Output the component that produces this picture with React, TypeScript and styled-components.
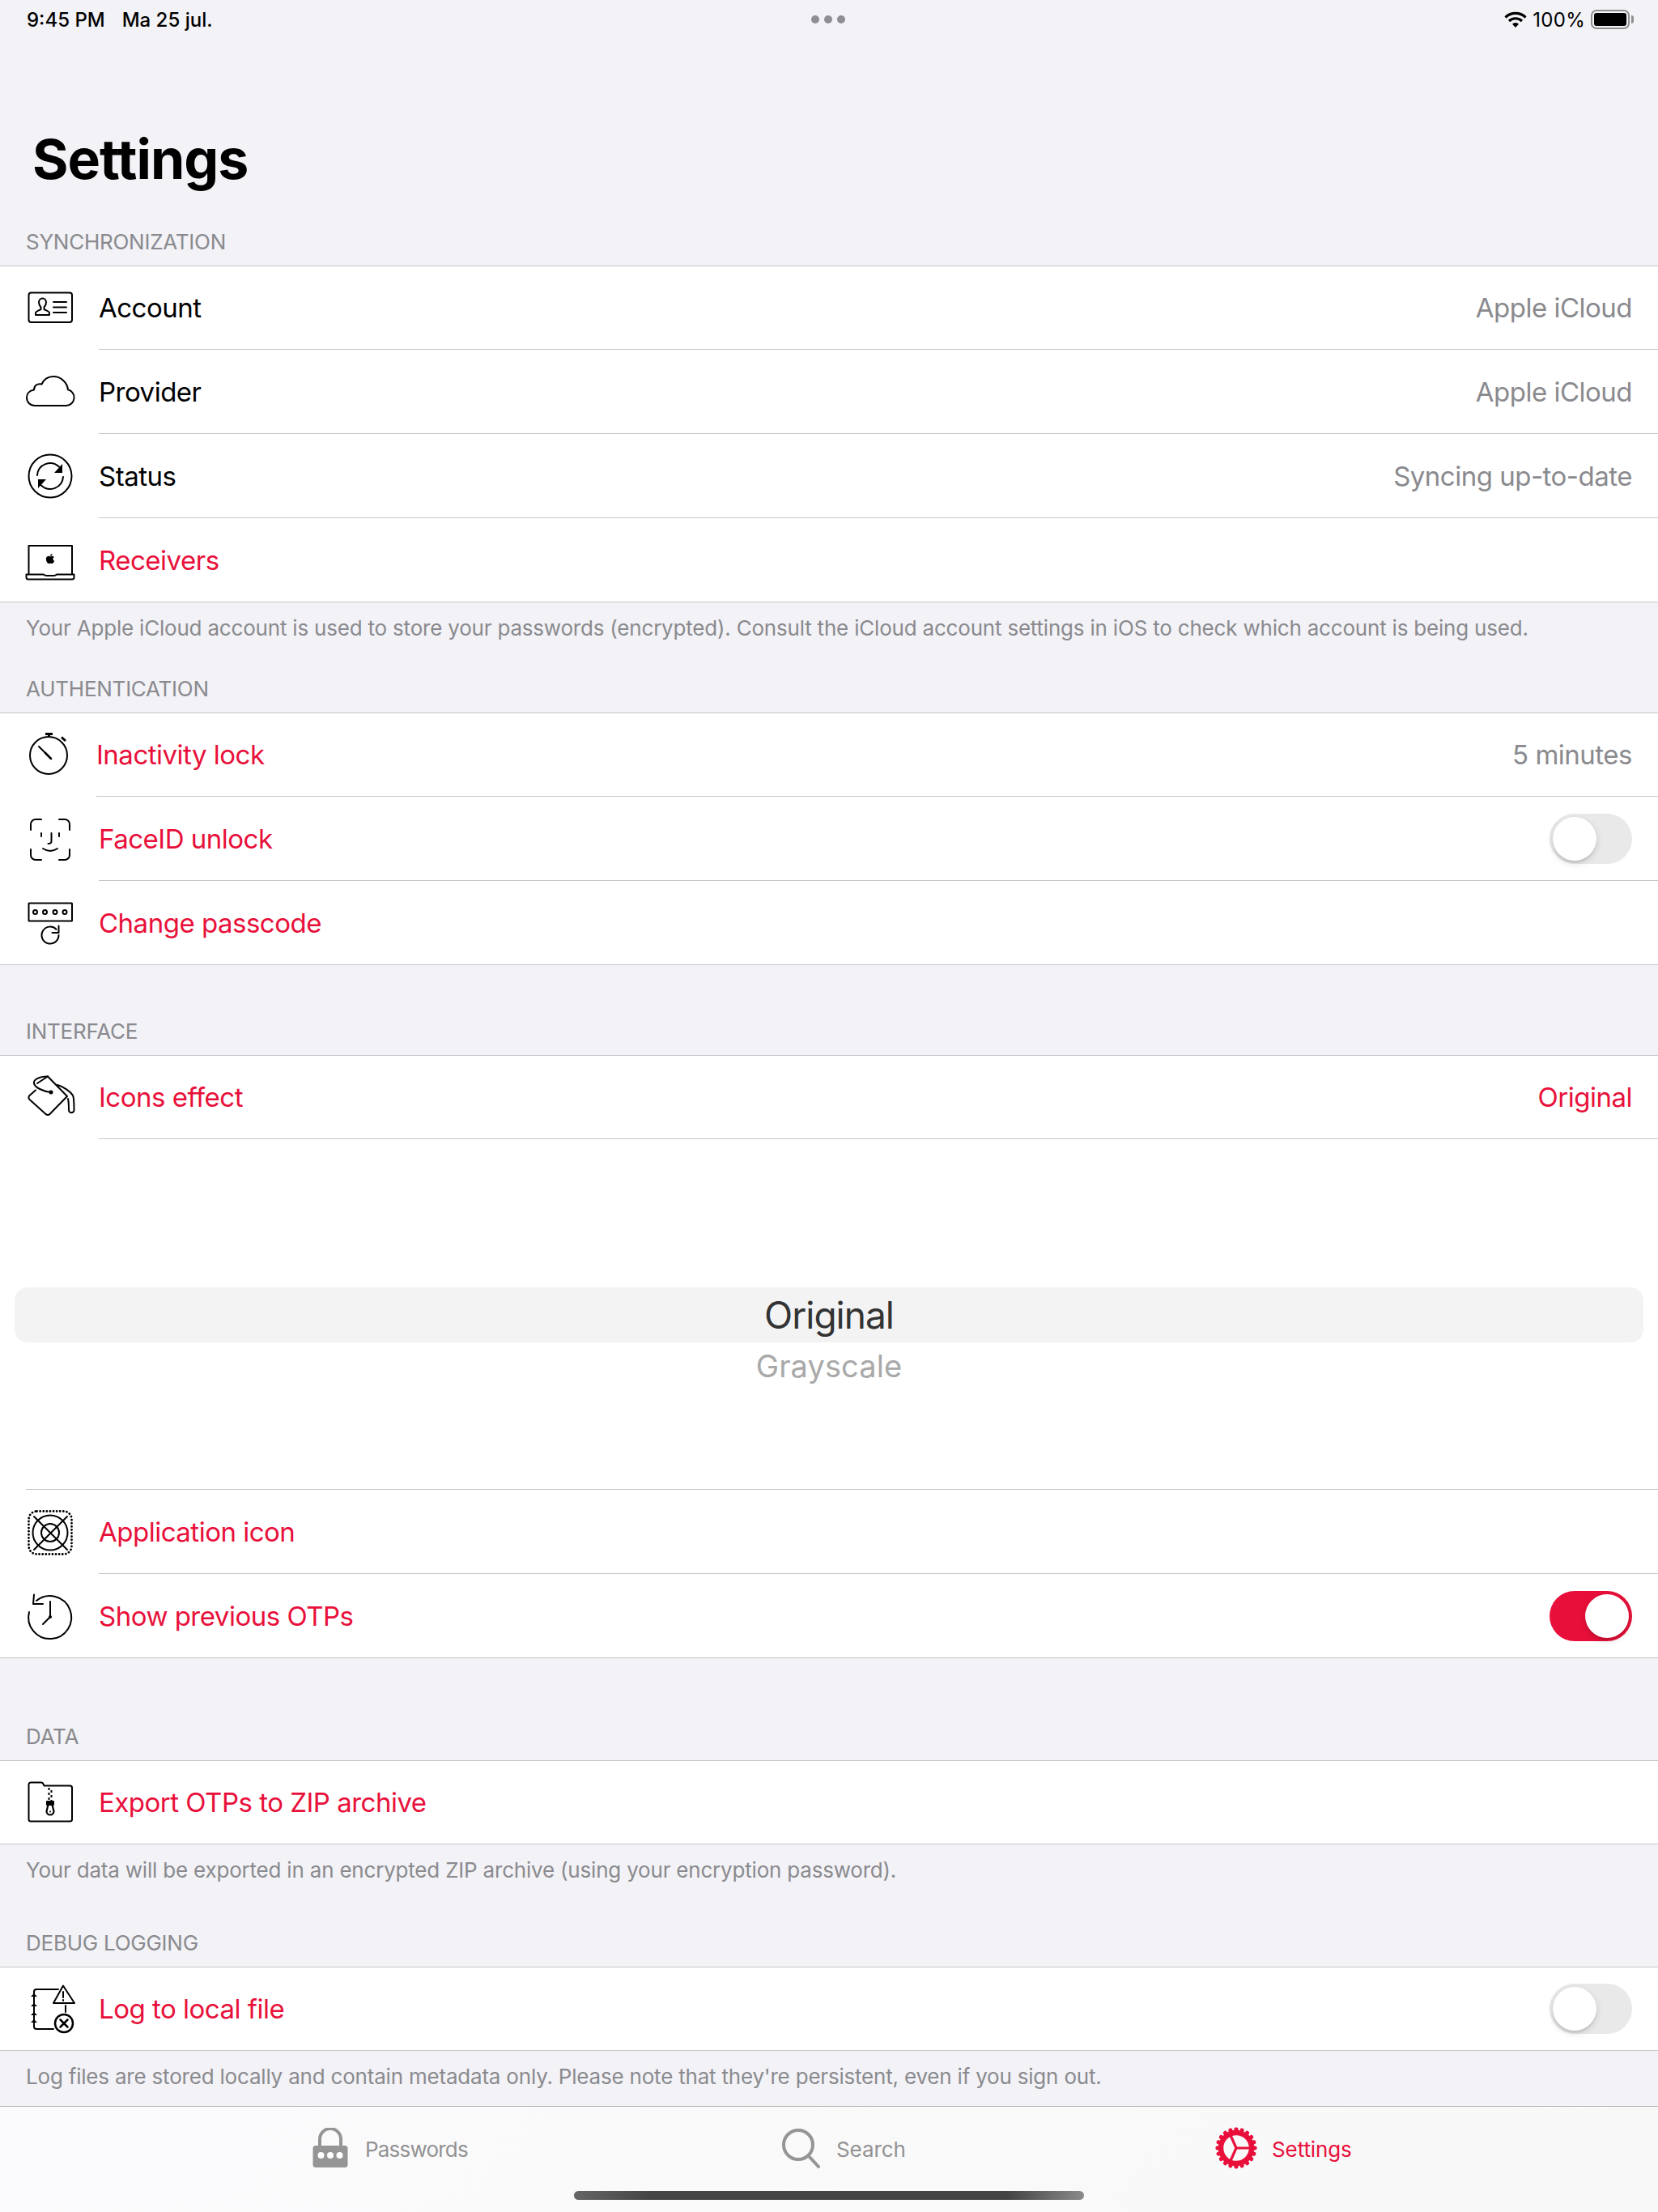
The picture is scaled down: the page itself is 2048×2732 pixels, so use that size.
import React from "react";
import styled, { createGlobalStyle } from "styled-components";
import { FaApple } from "react-icons/fa";

const RED = "#e8103a";
const LINE = "#c6c6c8";
const GRAY = "#8a8a8e";

const Global = createGlobalStyle`
  html, body { margin: 0; padding: 0; background: #f2f2f7; }
  * { box-sizing: border-box; }
`;

const Page = styled.div`
  width: 2048px;
  height: 2732px;
  display: flex;
  flex-direction: column;
  overflow: hidden;
  background: #f2f2f7;
  font-family: Inter, "Liberation Sans", sans-serif;
  color: #000;
`;

const StatusBar = styled.div`
  height: 48px;
  padding: 0 35px 0 33px;
  display: grid;
  grid-template-columns: 1fr auto 1fr;
  align-items: center;
  font-size: 24px;
  font-weight: 500;
`;
const StatusLeft = styled.div`
  display: flex;
  gap: 21px;
`;
const Dots = styled.div`
  display: flex;
  gap: 6px;
`;
const Dot = styled.span`
  width: 10px;
  height: 10px;
  border-radius: 50%;
  background: #8e8e93;
`;
const StatusRight = styled.div`
  display: flex;
  justify-content: flex-end;
  align-items: center;
  gap: 7px;
  font-weight: 400;
  letter-spacing: 0.3px;
`;
const Battery = styled.div`
  position: relative;
  width: 48px;
  height: 24px;
  border: 2px solid #8f8f8f;
  border-radius: 7px;
  padding: 2px;
  &::before {
    content: "";
    display: block;
    height: 100%;
    border-radius: 3px;
    background: #000;
  }
  &::after {
    content: "";
    position: absolute;
    right: -7px;
    top: 5px;
    width: 3px;
    height: 10px;
    background: #8f8f8f;
    border-radius: 0 3px 3px 0;
  }
`;

const Title = styled.h1`
  margin: 108px 0 0;
  padding-left: 40px;
  font-size: 68px;
  line-height: 80px;
  font-weight: 700;
  letter-spacing: -1px;
`;

const SectionHeader = styled.div<{ $h: number }>`
  height: ${(p) => p.$h}px;
  padding: 0 32px 13px;
  display: flex;
  align-items: flex-end;
  font-size: 26px;
  line-height: 32px;
  letter-spacing: -0.25px;
  color: ${GRAY};
`;
const Footer = styled.div`
  height: 48px;
  padding: 16px 32px 0;
  font-size: 26px;
  line-height: 32px;
  letter-spacing: -0.2px;
  color: ${GRAY};
  white-space: nowrap;
`;

const Group = styled.div`
  background: #fff;
  box-shadow: inset 0 1px 0 ${LINE}, inset 0 -1px 0 ${LINE};
`;
const Row = styled.div`
  height: 104px;
  display: flex;
  align-items: center;
`;
const IconSlot = styled.div<{ $narrow?: boolean }>`
  flex: none;
  width: 64px;
  height: 64px;
  margin-left: 30px;
  margin-right: ${(p) => (p.$narrow ? 25 : 28)}px;
  svg { display: block; overflow: visible; }
`;
const RowBody = styled.div<{ $sep?: boolean }>`
  flex: 1;
  height: 100%;
  padding-right: 32px;
  display: flex;
  align-items: center;
  justify-content: space-between;
  border-bottom: 1px solid ${(p) => (p.$sep ? LINE : "transparent")};
`;
const Label = styled.span<{ $red?: boolean }>`
  font-size: 33px;
  letter-spacing: -0.5px;
  color: ${(p) => (p.$red ? RED : "#000")};
`;
const Value = styled.span<{ $red?: boolean }>`
  font-size: 33px;
  letter-spacing: -0.5px;
  color: ${(p) => (p.$red ? RED : GRAY)};
`;
const Toggle = styled.div<{ $on?: boolean }>`
  width: 102px;
  height: 62px;
  padding: 4px;
  border-radius: 31px;
  display: flex;
  justify-content: ${(p) => (p.$on ? "flex-end" : "flex-start")};
  background: ${(p) => (p.$on ? RED : "#e9e9ea")};
`;
const Knob = styled.span`
  width: 54px;
  height: 54px;
  border-radius: 50%;
  background: #fff;
  box-shadow: 0 3px 8px rgba(0, 0, 0, 0.15), 0 3px 1px rgba(0, 0, 0, 0.06);
`;

const Picker = styled.div`
  height: 433px;
  padding-top: 183px;
  position: relative;
  &::after {
    content: "";
    position: absolute;
    left: 32px;
    right: 0;
    bottom: 0;
    height: 1px;
    background: ${LINE};
  }
`;
const PickerSelected = styled.div`
  height: 68px;
  margin: 0 18px;
  border-radius: 16px;
  background: #f3f3f3;
  display: flex;
  align-items: center;
  justify-content: center;
  font-size: 46px;
  letter-spacing: -1px;
  color: #333;
`;
const PickerOption = styled.div`
  height: 58px;
  display: flex;
  align-items: center;
  justify-content: center;
  font-size: 38px;
  letter-spacing: 0.1px;
  color: #a9a9a9;
`;

const Spacer = styled.div`
  flex: 1;
`;

const TabBar = styled.div`
  position: relative;
  height: 131px;
  flex: none;
  padding: 25px 0 0 386px;
  display: flex;
  align-items: flex-start;
  gap: 387px;
  border-top: 1px solid #b2b2b2;
  background: linear-gradient(135deg, #fbfbfd, #f8f8f8);
`;
const Tab = styled.div<{ $active?: boolean; $gap: number; $w: number }>`
  width: ${(p) => p.$w}px;
  height: 52px;
  flex: none;
  display: flex;
  align-items: center;
  gap: ${(p) => p.$gap}px;
  font-size: 26px;
  color: ${(p) => (p.$active ? RED : "#929292")};
  svg { display: block; flex: none; }
`;
const TabLabel = styled.span<{ $tight?: boolean }>`
  padding-top: 2px;
  white-space: nowrap;
  letter-spacing: ${(p) => (p.$tight ? -0.8 : -0.1)}px;
`;
const HomeIndicator = styled.div`
  position: absolute;
  left: 709px;
  top: 104px;
  width: 630px;
  height: 11px;
  border-radius: 6px;
  background: linear-gradient(90deg, #666 0%, #444 15%, #444 85%, #8a8a8a 100%);
`;

type P = { children: React.ReactNode };
const Ico = ({ children }: P) => (
  <svg width="64" height="64" viewBox="0 0 64 64" fill="none" stroke="#000" strokeWidth="2" strokeLinecap="round" strokeLinejoin="round">
    {children}
  </svg>
);

const AccountIcon = () => (
  <Ico>
    <rect x="5.5" y="13.5" width="53.5" height="36.5" rx="3" />
    <path d="M14 41v-2.5c0-2.5 5-3 6.5-4.500v-2.500c-1.600-1.600-2.500-3.500-2.500-6 0-3 2-5 4.500-5s4.500 2 4.500 5c0 2.500-1 4.400-2.500 6v2.500c1.500 1.500 6.500 2 6.500 4.500V41z" />
    <path d="M36 25h16M36 31.500h16M36 38h16" />
  </Ico>
);
const CloudIcon = () => (
  <Ico>
    <path d="M13 49H52a10 10 0 0 0 2-19.700C53 20 45 13 36 13c-7 0-12 4-14.500 9.500C16 21 12 24.500 12 29.500 6 30.500 3 34.500 3 39c0 6 4.500 10 10 10z" />
  </Ico>
);
const StatusIcon = () => (
  <Ico>
    <circle cx="32" cy="32" r="26.500" />
    <path d="M16 31A16 16 0 0 1 43 20.500M48 33A16 16 0 0 1 21 43.500" />
    <path d="M47 17v11h-10zM17 47v-11h10z" fill="#000" stroke="none" />
  </Ico>
);
const LaptopIcon = () => (
  <Ico>
    <path d="M5.500 49V14h53.500v35" />
    <path d="M2.500 49.500H24c1 1.500 2 1.500 4 1.500h8c2 0 3 0 4-1.500H61.500V53a2.500 2.500 0 0 1-2.500 2.500H5A2.500 2.500 0 0 1 2.500 53z" />
    <FaApple x={25} y={23} size={14} fill="#000" stroke="none" />
  </Ico>
);
const TimerIcon = () => (
  <Ico>
    <circle cx="30" cy="33" r="23" />
    <path d="M26 6.500h9M30.500 6.500v3" strokeWidth="3" strokeLinecap="butt" />
    <path d="M46 10.500l5 4.500" strokeWidth="3" strokeLinecap="butt" />
    <path d="M18 22l15 15" />
    <path d="M26 30l7 7" strokeWidth="2.600" />
  </Ico>
);
const FaceIcon = () => (
  <Ico>
    <path d="M8 21v-7a6 6 0 0 1 6-6h7M43 8h7a6 6 0 0 1 6 6v7M56 45v7a6 6 0 0 1-6 6h-7M21 58h-7a6 6 0 0 1-6-6v-7" />
    <path d="M21 25v4M43 25v4" />
    <path d="M33.500 25v10c0 2-1.500 3-4 3" />
    <path d="M23 44q9 6 18 0" />
  </Ico>
);
const PasscodeIcon = () => (
  <Ico>
    <rect x="5.500" y="7.500" width="53.500" height="22" rx="0.500" />
    <circle cx="13.500" cy="18.500" r="2.500" />
    <circle cx="25.500" cy="18.500" r="2.500" />
    <circle cx="38" cy="18.500" r="2.500" />
    <circle cx="50" cy="18.500" r="2.500" />
    <path d="M42.500 47A10.500 10.500 0 1 1 39.500 39.700" />
    <path d="M42.500 35.500V44H34.500" />
  </Ico>
);
const BucketIcon = () => (
  <Ico>
    <path d="M29 6.500L53 31 31.500 53a3.500 3.500 0 0 1-5 0L6.500 35a3.500 3.500 0 0 1 0-5l7.500-6.500" />
    <path d="M29 6.500C18 6.500 11 10.500 12 15c.8 5 11 10 21 11" />
    <path d="M16 15L29 6.500" />
    <circle cx="33" cy="26" r="1.500" fill="#000" />
    <path d="M41 17c7 2 16 8 19 13 1.500 3 1.500 8 1.500 18a2.500 2.500 0 0 1-6.500 0c0-5 0-9-1-14" />
  </Ico>
);
const AppIcon = () => (
  <Ico>
    <rect x="5.500" y="6.500" width="53" height="53" rx="10" strokeDasharray="0.100 4" strokeWidth="2.800" />
    <circle cx="32" cy="33" r="21.500" />
    <circle cx="32" cy="33" r="11" />
    <path d="M12 13l41 41M53 13l-41 41" />
  </Ico>
);
const HistoryIcon = () => (
  <Ico>
    <path d="M15 13A26.500 26.500 0 1 1 6 27" />
    <path d="M12 5.500l-1 11.500h12" />
    <path d="M32 14v19l-9 9" />
    <circle cx="32" cy="33" r="2" fill="#000" stroke="none" />
  </Ico>
);
const ZipIcon = () => (
  <Ico>
    <path d="M5.500 10a2.500 2.500 0 0 1 2.500-2.500H21c2 0 2.500 1.500 3.500 4H56.500a2.500 2.500 0 0 1 2.500 2.500v39a2.500 2.500 0 0 1-2.500 2.500H8A2.500 2.500 0 0 1 5.500 53z" />
    <path d="M30.500 14v17" strokeDasharray="3 3" strokeLinecap="butt" />
    <path d="M33.500 17v14" strokeDasharray="3 3" strokeLinecap="butt" />
    <rect x="28" y="31" width="8" height="4" fill="#000" />
    <path d="M29.500 35h5l2 8a4.500 4.500 0 0 1-9 0z" strokeWidth="2.200" />
    <circle cx="32" cy="43.500" r="1" fill="#000" stroke="none" />
  </Ico>
);
const LogIcon = () => (
  <Ico>
    <path d="M42 8H15a3 3 0 0 0-3 3v43a3 3 0 0 0 3 3h21" />
    <path d="M8 17h8l-4-4zM8 29h8l-4-4zM8 40h8l-4-4zM8 49h8l-4-4z" fill="#000" stroke="none" />
    <path d="M48 3.500L62 25H36z" />
    <path d="M48 11v7M48 21v1" />
    <path d="M51 28v8" />
    <circle cx="49" cy="50" r="11" strokeWidth="2.500" />
    <path d="M44.500 45.500l9 9M53.500 45.500l-9 9" strokeWidth="2.500" />
  </Ico>
);

const LockTab = () => (
  <svg width="44" height="50" viewBox="0 0 44 50">
    <path d="M9 24V14a13 13 0 0 1 26 0V24" fill="none" stroke="#959595" strokeWidth="4" />
    <rect x="0.500" y="22" width="43" height="27" rx="3.500" fill="#959595" />
    <circle cx="10.500" cy="34" r="4" fill="#fff" />
    <circle cx="22" cy="34" r="4" fill="#fff" />
    <circle cx="33.500" cy="34" r="4" fill="#fff" />
  </svg>
);
const SearchTab = () => (
  <svg width="48" height="50" viewBox="0 0 48 50" fill="none" stroke="#959595" strokeWidth="4" strokeLinecap="round">
    <circle cx="20" cy="21" r="18" />
    <path d="M33 35l12 13" />
  </svg>
);
const GearTab = () => (
  <svg width="52" height="52" viewBox="0 0 52 52" fill="none" stroke={RED}>
    {Array.from({ length: 20 }, (_, i) => (
      <rect key={i} x="23.500" y="0.500" width="5" height="9" rx="2" fill={RED} stroke="none" transform={`rotate(${i * 18} 26 26)`} />
    ))}
    <circle cx="26" cy="26" r="19" strokeWidth="6.500" />
    <path d="M26 26h19M26 26L18 8M26 26L18 44" strokeWidth="3.200" />
  </svg>
);
const WifiIcon = () => (
  <svg width="28" height="20" viewBox="0 0 28 20" fill="none" stroke="#000" strokeWidth="3.200">
    <path d="M1.500 7.500a18 18 0 0 1 25 0" />
    <path d="M6 12a11.500 11.500 0 0 1 16 0" />
    <path d="M14 20l-4-4.200a5.600 5.600 0 0 1 8 0z" fill="#000" stroke="none" />
  </svg>
);

export default function App() {
  return (
    <Page>
      <Global />
      <StatusBar>
        <StatusLeft>
          <span>9:45 PM</span>
          <span>Ma 25 jul.</span>
        </StatusLeft>
        <Dots>
          <Dot />
          <Dot />
          <Dot />
        </Dots>
        <StatusRight>
          <WifiIcon />
          <span>100%</span>
          <Battery />
        </StatusRight>
      </StatusBar>

      <Title>Settings</Title>

      <SectionHeader $h={92}>SYNCHRONIZATION</SectionHeader>
      <Group>
        <Row>
          <IconSlot><AccountIcon /></IconSlot>
          <RowBody $sep><Label>Account</Label><Value>Apple iCloud</Value></RowBody>
        </Row>
        <Row>
          <IconSlot><CloudIcon /></IconSlot>
          <RowBody $sep><Label>Provider</Label><Value>Apple iCloud</Value></RowBody>
        </Row>
        <Row>
          <IconSlot><StatusIcon /></IconSlot>
          <RowBody $sep><Label>Status</Label><Value>Syncing up-to-date</Value></RowBody>
        </Row>
        <Row>
          <IconSlot><LaptopIcon /></IconSlot>
          <RowBody><Label $red>Receivers</Label></RowBody>
        </Row>
      </Group>
      <Footer>Your Apple iCloud account is used to store your passwords (encrypted). Consult the iCloud account settings in iOS to check which account is being used.</Footer>

      <SectionHeader $h={88}>AUTHENTICATION</SectionHeader>
      <Group>
        <Row>
          <IconSlot $narrow><TimerIcon /></IconSlot>
          <RowBody $sep><Label $red>Inactivity lock</Label><Value>5 minutes</Value></RowBody>
        </Row>
        <Row>
          <IconSlot><FaceIcon /></IconSlot>
          <RowBody $sep><Label $red>FaceID unlock</Label><Toggle><Knob /></Toggle></RowBody>
        </Row>
        <Row>
          <IconSlot><PasscodeIcon /></IconSlot>
          <RowBody><Label $red>Change passcode</Label></RowBody>
        </Row>
      </Group>

      <SectionHeader $h={111}>INTERFACE</SectionHeader>
      <Group>
        <Row>
          <IconSlot><BucketIcon /></IconSlot>
          <RowBody $sep><Label $red>Icons effect</Label><Value $red>Original</Value></RowBody>
        </Row>
        <Picker>
          <PickerSelected>Original</PickerSelected>
          <PickerOption>Grayscale</PickerOption>
        </Picker>
        <Row>
          <IconSlot><AppIcon /></IconSlot>
          <RowBody $sep><Label $red>Application icon</Label></RowBody>
        </Row>
        <Row>
          <IconSlot><HistoryIcon /></IconSlot>
          <RowBody><Label $red>Show previous OTPs</Label><Toggle $on><Knob /></Toggle></RowBody>
        </Row>
      </Group>

      <SectionHeader $h={126}>DATA</SectionHeader>
      <Group>
        <Row>
          <IconSlot><ZipIcon /></IconSlot>
          <RowBody><Label $red>Export OTPs to ZIP archive</Label></RowBody>
        </Row>
      </Group>
      <Footer>Your data will be exported in an encrypted ZIP archive (using your encryption password).</Footer>

      <SectionHeader $h={103}>DEBUG LOGGING</SectionHeader>
      <Group>
        <Row>
          <IconSlot><LogIcon /></IconSlot>
          <RowBody><Label $red>Log to local file</Label><Toggle><Knob /></Toggle></RowBody>
        </Row>
      </Group>
      <Footer>Log files are stored locally and contain metadata only. Please note that they're persistent, even if you sign out.</Footer>

      <Spacer />

      <TabBar>
        <Tab $gap={21} $w={193}><LockTab /><TabLabel $tight>Passwords</TabLabel></Tab>
        <Tab $gap={19} $w={148}><SearchTab /><TabLabel>Search</TabLabel></Tab>
        <Tab $gap={18} $w={167} $active><GearTab /><TabLabel>Settings</TabLabel></Tab>
        <HomeIndicator />
      </TabBar>
    </Page>
  );
}
